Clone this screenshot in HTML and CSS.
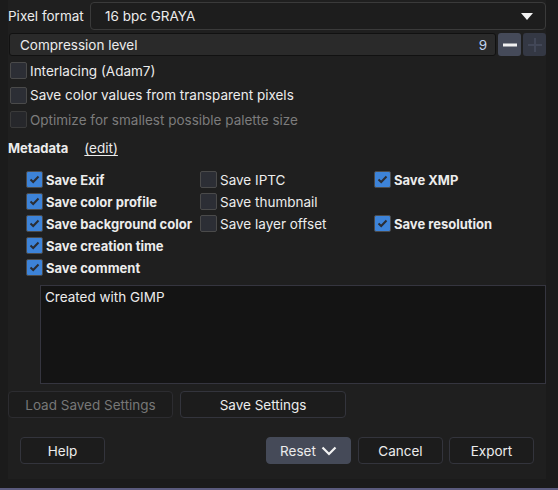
FILE: index.html
```html
<!DOCTYPE html>
<html>
<head>
<meta charset="utf-8">
<link rel="stylesheet" href="styles.css">
</head>
<body>
<div class="panel">
  <div class="row-format">
    <span class="label">Pixel format</span>
    <div class="dropdown">
      <span>16 bpc GRAYA</span>
      <svg class="arrow" width="12" height="7" viewBox="0 0 12 7"><polygon points="0,0 12,0 6,7" fill="#f2f2f2"/></svg>
    </div>
  </div>
  <div class="row-spin">
    <div class="spin"><span>Compression level</span><span class="val">9</span></div>
    <div class="sbtn minus"><svg width="14" height="14" viewBox="0 0 14 14"><rect x="0" y="5.5" width="14" height="3" fill="#f0f0f0"/></svg></div>
    <div class="sbtn plus"><svg width="14" height="14" viewBox="0 0 14 14"><rect x="0" y="6" width="14" height="2" fill="#424757"/><rect x="6" y="0" width="2" height="14" fill="#424757"/></svg></div>
  </div>
  <div class="opts">
    <label class="chk"><span class="box"></span>Interlacing (Adam7)</label>
    <label class="chk"><span class="box"></span>Save color values from transparent pixels</label>
    <label class="chk dis"><span class="box"></span>Optimize for smallest possible palette size</label>
  </div>
  <div class="meta-head"><b>Metadata</b><span class="edit">(edit)</span></div>
  <div class="grid">
    <label class="chk on"><span class="box"><svg width="11" height="9" viewBox="0 0 11 9"><path d="M1.5 4.5 L4.2 7 L9.5 1.5" stroke="#2b2d33" stroke-width="2" fill="none"/></svg></span>Save Exif</label>
    <label class="chk"><span class="box"></span>Save IPTC</label>
    <label class="chk on"><span class="box"><svg width="11" height="9" viewBox="0 0 11 9"><path d="M1.5 4.5 L4.2 7 L9.5 1.5" stroke="#2b2d33" stroke-width="2" fill="none"/></svg></span>Save XMP</label>
    <label class="chk on"><span class="box"><svg width="11" height="9" viewBox="0 0 11 9"><path d="M1.5 4.5 L4.2 7 L9.5 1.5" stroke="#2b2d33" stroke-width="2" fill="none"/></svg></span>Save color profile</label>
    <label class="chk"><span class="box"></span>Save thumbnail</label>
    <span></span>
    <label class="chk on"><span class="box"><svg width="11" height="9" viewBox="0 0 11 9"><path d="M1.5 4.5 L4.2 7 L9.5 1.5" stroke="#2b2d33" stroke-width="2" fill="none"/></svg></span>Save background color</label>
    <label class="chk"><span class="box"></span>Save layer offset</label>
    <label class="chk on"><span class="box"><svg width="11" height="9" viewBox="0 0 11 9"><path d="M1.5 4.5 L4.2 7 L9.5 1.5" stroke="#2b2d33" stroke-width="2" fill="none"/></svg></span>Save resolution</label>
    <label class="chk on"><span class="box"><svg width="11" height="9" viewBox="0 0 11 9"><path d="M1.5 4.5 L4.2 7 L9.5 1.5" stroke="#2b2d33" stroke-width="2" fill="none"/></svg></span>Save creation time</label>
    <span></span><span></span>
    <label class="chk on"><span class="box"><svg width="11" height="9" viewBox="0 0 11 9"><path d="M1.5 4.5 L4.2 7 L9.5 1.5" stroke="#2b2d33" stroke-width="2" fill="none"/></svg></span>Save comment</label>
  </div>
  <div class="comment">Created with GIMP</div>
  <div class="row-settings">
    <div class="btn wide dis">Load Saved Settings</div>
    <div class="btn wide">Save Settings</div>
  </div>
  <div class="row-actions">
    <div class="btn act">Help</div>
    <div class="spacer"></div>
    <div class="btn act reset">Reset <svg width="16" height="10" viewBox="0 0 16 10"><path d="M1.5 1.5 L8 8 L14.5 1.5" stroke="#f2f2f2" stroke-width="2.2" fill="none"/></svg></div>
    <div class="btn act">Cancel</div>
    <div class="btn act">Export</div>
  </div>
</div>
<div class="bottomline"></div>
</body>
</html>
```

FILE: styles.css
```css
html, body {
  margin: 0;
  padding: 0;
}
body {
  width: 558px;
  height: 490px;
  background: #1b1b1b;
  font-family: Inter, "Noto Sans", sans-serif;
  font-size: 13.5px;
  color: #ececec;
  overflow: hidden;
  position: relative;
}
.panel {
  margin-left: 8px;
  width: 538px;
  height: 479px;
  background: #1f1f1f;
  box-sizing: border-box;
  padding-top: 2px;
}
.row-format {
  display: flex;
  align-items: center;
  height: 28px;
}
.label {
  width: 82px;
  flex: none;
}
.dropdown {
  flex: 1;
  height: 28px;
  box-sizing: border-box;
  border: 1px solid #3a3a3a;
  border-radius: 4px;
  background: #1d1d1d;
  display: flex;
  align-items: center;
  justify-content: space-between;
  padding: 0 12px 0 14px;
}
.row-spin {
  display: flex;
  margin-top: 3px;
  height: 23px;
  gap: 1px;
}
.spin {
  width: 489px;
  box-sizing: border-box;
  background: #2a2a2a;
  border: 1px solid #111111;
  border-radius: 3px;
  display: flex;
  align-items: center;
  justify-content: space-between;
  padding: 0 8px 0 10px;
  margin-left: 1px;
}
.val {
  color: #bfd3f0;
}
.sbtn {
  width: 23px;
  height: 23px;
  border-radius: 3px;
  display: flex;
  align-items: center;
  justify-content: center;
  margin-left: 1px;
}
.minus { background: #454a59; }
.plus { background: #343844; }
.opts {
  display: flex;
  flex-direction: column;
  padding-left: 2px;
  margin-top: 6px;
  gap: 7.5px;
}
.chk {
  display: flex;
  align-items: center;
  gap: 3px;
  height: 17px;
  white-space: nowrap;
}
.box {
  width: 17px;
  height: 17px;
  box-sizing: border-box;
  border: 1px solid #4a4a4a;
  border-radius: 2px;
  background: #2c2e35;
  flex: none;
  display: flex;
  align-items: center;
  justify-content: center;
}
.chk.dis {
  color: #7c7c7c;
}
.chk.dis .box {
  background: #26272b;
  border-color: #3a3a3a;
}
.chk.on {
  font-weight: 700;
  font-size: 13px;
}
.chk.on .box {
  background: #3d83d8;
  border-color: #4b4b4b;
}
.meta-head {
  margin-top: 11px;
  display: flex;
  gap: 16px;
  height: 17px;
  align-items: center;
  font-size: 13px;
}
.meta-head .edit {
  font-size: 13.5px;
}
.edit {
  text-decoration: underline;
  text-underline-offset: 2px;
}
.grid {
  margin-top: 15px;
  margin-left: 18px;
  display: grid;
  grid-template-columns: 174px 174px 174px;
  row-gap: 5px;
}
.comment {
  margin: 9px 0 0 32px;
  height: 99px;
  box-sizing: border-box;
  background: #141414;
  border: 1px solid #35353f;
  padding: 3px 4px;
}
.row-settings {
  display: flex;
  gap: 7px;
  margin-top: 7px;
}
.btn {
  height: 27px;
  box-sizing: border-box;
  border: 1px solid #33343c;
  border-radius: 4px;
  background: #1c1c1c;
  display: flex;
  align-items: center;
  justify-content: center;
}
.btn.wide {
  width: 166px;
}
.btn.dis {
  color: #777777;
  border-color: #2c2c30;
  width: 165px;
}
.row-actions {
  display: flex;
  margin-top: 19px;
  padding: 0 12px 0 12px;
  gap: 6px;
}
.spacer {
  flex: 1;
}
.btn.act {
  width: 85px;
}
.btn.reset {
  background: #454a58;
  border-color: #454a58;
  gap: 5px;
  margin-right: 1px;
}
.bottomline {
  position: absolute;
  left: 0;
  right: 0;
  bottom: 0;
  height: 2px;
  background: #5b5b7e;
}
```
